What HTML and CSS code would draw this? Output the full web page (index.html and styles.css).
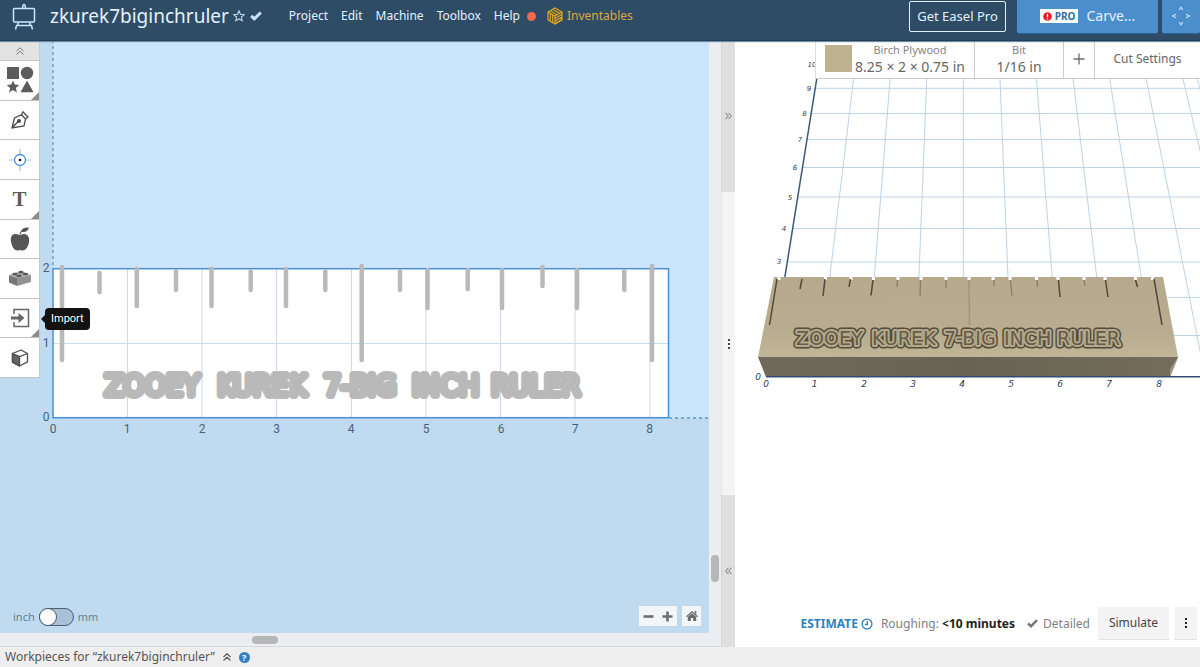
FILE: index.html
```html
<!DOCTYPE html>
<html lang="en">
<head>
<meta charset="utf-8">
<title>zkurek7biginchruler</title>
<link rel="stylesheet" href="styles.css">
</head>
<body>
<header class="topbar">
  <a class="logo" href="#" aria-label="Home"><svg width="26" height="26" viewBox="0 0 26 26" fill="none" stroke="#cbe8fb" stroke-width="1.5"><rect x="2.5" y="5.5" width="21" height="13.5" rx="1"/><path d="M11.5 5.500l.5-3q1-2 2 0l.5 3M5 22.500h16M7 19.500v3M19 19.500v3M5.500 22.500l-1 4M20.500 22.500l1 4"/></svg></a>
  <h1 class="title">zkurek7biginchruler</h1>
  <button class="bare star" aria-label="Favorite"><svg width="12" height="12" viewBox="0 0 12 12" fill="none" stroke="#bcd9ee" stroke-width="1.1"><path d="M6 .9l1.500 3.300 3.700.4-2.800 2.400.8 3.700L6 8.900l-3.200 1.800.8-3.700L.8 4.600l3.700-.4z"/></svg></button>
  <svg class="saved" width="12" height="10" viewBox="0 0 12 10" fill="none" stroke="#cbe3f4" stroke-width="3"><path d="M1.200 4.800l3.100 3L10.800 1.500"/></svg>
  <nav class="menu">
    <a href="#">Project</a><a href="#">Edit</a><a href="#">Machine</a><a href="#">Toolbox</a><a href="#">Help</a>
  </nav>
  <span class="dot"></span>
  <a class="shop" href="#"><svg width="16" height="18" viewBox="0 0 16 18" fill="none" stroke="#e5a81d" stroke-width="1.200"><path d="M8 1l7 4v8l-7 4-7-4V5zM8 9v8M1 5l7 4 7-4M3.300 3.700l7 4M5.700 2.300l7 4M3.300 6.300v8M5.700 7.700v8M8 11.500l7-4M8 14l7-4M8 16.500l7-4"/></svg>Inventables</a>
  <div class="actions">
    <button class="pro">Get Easel Pro</button>
    <button class="carve"><span class="badge"><svg width="9" height="9" viewBox="0 0 9 9"><circle cx="4.500" cy="4.500" r="4.300" fill="#e51d24"/><path d="M4.500 1.800v3.500M4.500 6.200v1.300" stroke="#fff" stroke-width="1.300"/></svg>PRO</span>Carve...</button>
    <button class="jog" aria-label="Jog"><svg width="20" height="20" viewBox="0 0 20 20" fill="none" stroke="#cce5f8" stroke-width="1.100"><path d="M8.200 4l1.800-2.700L11.800 4M8.200 16l1.800 2.700L11.800 16M5 8.200L1.500 10 5 11.800M15 8.200l3.500 1.800-3.500 1.800"/></svg></button>
  </div>
</header>

<main class="work">
  <section class="design">
    <div class="canvas">
      <svg class="drawing" viewBox="0 40 709 593" preserveAspectRatio="xMinYMin slice">
        <rect y="40" width="709" height="593" fill="#c0daf0"/>
        <rect x="53" y="40" width="656" height="378" fill="#cbe5fd"/>
        <path d="M53 40V268M669 418H709" stroke="#5b97cb" stroke-width="1.300" stroke-dasharray="3 3"/>
        <rect x="53" y="268.700" width="615.500" height="149" fill="#fff"/>
        <path d="M127.500 269V417M202 269V417M276.500 269V417M351.500 269V417M426 269V417M500.500 269V417M575 269V417M650 269V417M53 343.500H668" stroke="#c9dbec"/>
        <rect x="53" y="268.700" width="615.500" height="149" fill="none" stroke="#4a90cf" stroke-width="1.500"/>
        <path class="marks" d="M62 267V360M99.500 273V292M136.800 269V306M176 271V290M211.500 269V306M250.700 271V290M286 269V306M325.300 271V290M361.700 266V360M400 271V290M427.500 270V308M467.700 270V289M502 270V308M542.500 267V286M577 270V308M624.300 271V290M652 266V360"/>
        <g class="lettering"><text x="105" y="395">ZOOEY</text><text x="216" y="395">KUREK</text><text x="324" y="395">7-BIG</text><text x="412" y="395">INCH</text><text x="491" y="395">RULER</text></g>
        <g class="scale"><text x="53" y="433">0</text><text x="127" y="433">1</text><text x="202" y="433">2</text><text x="276.500" y="433">3</text><text x="351" y="433">4</text><text x="426" y="433">5</text><text x="501" y="433">6</text><text x="575" y="433">7</text><text x="649.500" y="433">8</text><text x="46" y="421">0</text><text x="46" y="347">1</text><text x="46" y="272">2</text></g>
      </svg>

      <div class="tools">
        <button class="collapse" aria-label="Collapse"><svg width="8" height="8" viewBox="0 0 8 8" fill="none" stroke="#777" stroke-width="1"><path d="M.5 4L4 .8 7.500 4M.5 7.500L4 4.300l3.500 3.200"/></svg></button>
        <div class="toolset">
          <button class="tool more" aria-label="Shapes"><svg width="28" height="28" viewBox="0 0 28 28" fill="#5c5c5c"><rect x="1" y="1" width="12" height="12"/><circle cx="21" cy="7" r="6.200"/><path d="M7 14.500l1.800 4.100 4.400.4-3.300 3 1 4.400L7 24.100l-3.900 2.300 1-4.400-3.300-3 4.400-.4zM21 14.500l6.500 11.800h-13z"/></svg></button>
          <button class="tool" aria-label="Pen"><svg width="20" height="20" viewBox="0 0 20 20" fill="none" stroke="#4b4b4b" stroke-width="1.300"><path d="M2 18L4.500 8l7-3.200 1.500-3 5 5.200-2.500 2-1.500 7zM2 18l6-6.500M11.500 4.800l4 4.200"/><circle cx="9" cy="11" r="1.300" fill="#4b4b4b"/></svg></button>
          <button class="tool" aria-label="Drill point"><svg width="22" height="22" viewBox="0 0 22 22" fill="none"><path d="M11 0v5M11 17v5M0 11h5M17 11h5" stroke="#b5b9be" stroke-width="1.100"/><circle cx="11" cy="11" r="5.500" stroke="#3e8de0" stroke-width="1.300"/><circle cx="11" cy="11" r="1.300" fill="#111"/></svg></button>
          <button class="tool more text-tool">T</button>
          <button class="tool" aria-label="Icons"><svg width="20" height="24" viewBox="0 0 20 24" fill="#555"><path d="M9.500 8.300C5.500 5.500.5 7 .8 13c.3 6 3.700 11 7 10.500l2.200-.5 2.200.5c3.300.5 7-4.500 7-10.500 0-5.500-5-7.500-8.700-4.700-.1-2 .6-2.900 1.500-3.300C16 5.500 18.500 3 18.800.5c-4-.3-7 .7-7.800 3.800-1 .8-1.500 2-1.500 4z"/></svg></button>
          <button class="tool" aria-label="Apps"><svg width="24" height="20" viewBox="0 0 24 20"><path d="M1 7l8 3v8l-8-3.500z" fill="#777"/><path d="M9 10l14-3v7l-14 4z" fill="#929292"/><path d="M1 7l12-4 10 4-14 3z" fill="#a3a3a3"/><g fill="#555"><ellipse cx="7" cy="6" rx="2.500" ry="1.200"/><ellipse cx="13" cy="4" rx="2.500" ry="1.200"/><ellipse cx="11" cy="8" rx="2.500" ry="1.200"/><ellipse cx="17.500" cy="6" rx="2.500" ry="1.200"/></g></svg></button>
          <button class="tool more" aria-label="Import"><svg width="20" height="20" viewBox="0 0 20 20" fill="none" stroke="#666"><path d="M4 6V1.500h14.500v17H4V14" stroke-width="1.500"/><path d="M1 10h8" stroke-width="3"/><path d="M8.500 5l6 5-6 5z" fill="#666" stroke="none"/></svg><span class="tip" role="tooltip">Import</span></button>
          <button class="tool" aria-label="Box"><svg width="18" height="18" viewBox="0 0 18 18" fill="#fff" stroke="#4c4c4c" stroke-width="1.300" stroke-linejoin="round"><path d="M1.500 4.500L10 1l6.500 3.500v8.300L8.500 17l-7-3.700z"/><path d="M1.500 4.500l7 3.200V17l-7-3.700z" fill="#666"/><path d="M8.500 7.700l8-3.200"/></svg></button>
        </div>
      </div>

      <label class="units"><span>inch</span><input type="checkbox" role="switch"><span>mm</span></label>
      <div class="zoom">
        <div class="pair"><button aria-label="Zoom out"><svg width="11" height="11" viewBox="0 0 11 11"><path d="M.5 5.500h10" stroke="#6e6e6e" stroke-width="2.600"/></svg></button><button aria-label="Zoom in"><svg width="11" height="11" viewBox="0 0 11 11"><path d="M.5 5.500h10M5.500.5v10" stroke="#6e6e6e" stroke-width="2.600"/></svg></button></div>
        <button class="home" aria-label="Fit"><svg width="12" height="10" viewBox="0 0 12 10" fill="#6a6a6a"><path d="M6 2.300l4.200 3.800V10H7.200V7H4.800v3H1.800V6.100z"/><path d="M.5 5.700L6 .8l5.500 4.900" fill="none" stroke="#6a6a6a" stroke-width="1.200"/><path d="M8.700 0h1.600v3.500L8.700 2z"/></svg></button>
      </div>
    </div>
    <div class="vscroll"><span></span></div>
    <div class="hscroll"><span></span></div>
  </section>

  <div class="divider">
    <button class="grab expand" aria-label="Expand right"><svg width="7" height="8" viewBox="0 0 7 8" fill="none" stroke="#777"><path d="M.5.8L3.300 4 .5 7.200M3.500.8L6.300 4 3.500 7.200"/></svg></button>
    <div class="grab handle"><i></i><i></i><i></i></div>
    <button class="grab shrink" aria-label="Expand left"><svg width="7" height="8" viewBox="0 0 7 8" fill="none" stroke="#777"><path d="M3.500.8L.7 4l2.800 3.200M6.500.8L3.700 4l2.800 3.200"/></svg></button>
  </div>

  <section class="preview">
    <svg class="drawing" viewBox="735 40 465 607" preserveAspectRatio="xMinYMin slice">
      <defs>
        <linearGradient id="top" x1="0" y1="0" x2="0" y2="1"><stop offset="0" stop-color="#b6a98d"/><stop offset=".7" stop-color="#b9ad91"/><stop offset="1" stop-color="#c0b596"/></linearGradient>
        <linearGradient id="front" x1="0" y1="0" x2="1" y2="0"><stop offset="0" stop-color="#6f6a5b"/><stop offset=".5" stop-color="#696353"/><stop offset="1" stop-color="#746d5b"/></linearGradient>
      </defs>
      <path class="grid3d" d="M858.200 40L818 376M893.200 40L866.500 376M928.300 40L915 376M963.300 40V376M998.400 40L1012 376M1033.400 40L1060 376M1068.500 40L1108.500 376M1103.500 40L1157 376M1138.500 40L1205 376M1173.600 40L1254 376M1208 120L1195 70M814 88.300H1200M810 113.500H1200M806 139.500H1200M802 167.500H1200M797 197H1200M792 228.500H1200M787 262H1200M1000 297.500H1200M1000 335.500H1200"/>
      <path d="M823 40L772 357" stroke="#3a5878" stroke-width="1.500"/>
      <path d="M774 277H1163L1178 357H758z" fill="url(#top)"/>
      <path d="M758 357H1178L1170 377H766z" fill="url(#front)"/>
      <path d="M1178 357L1170 377V369z" fill="#9f967b"/>
      <path d="M830 309q60-18 110-20t110 7M800 290q70 12 190 4" fill="none" stroke="#c0a98a" stroke-width="2" opacity=".25"/>
      <path d="M766 376.700H1200" stroke="#2f4c70" stroke-width="1.400"/>
      <path class="notches" d="M779 277v3M825.500 277v3M851 277v3M873.500 277v3M898 277v3M921 277v3M946 277v3M969 277v3M993 277v3M1010 277v3M1036.500 277v3M1058 277v3M1084 277v3M1105 277v3M1135.500 277v3M1152.500 277v3"/>
      <path class="cuts" d="M777 279L769.500 325M802 279L800 289M825 279L823 296M850.500 279L849 287M873 280L871 295.500M1105.500 280L1108 297M1135.500 280L1137.500 287M1154 279L1162 325M1058.500 280L1060 297"/>
      <path class="cuts faint" d="M897.500 280L897 287M920.500 280L920 296M946 280V288M994 280V286M1010.500 280L1012 296M1037 280L1037.500 287M1084 280L1085 286"/>
      <path class="cuts pale" d="M969 280L969.500 325"/>
      <g class="engraved shade"><text x="796" y="345">ZOOEY</text><text x="872" y="345">KUREK</text><text x="944" y="345">7-BIG</text><text x="1004" y="345">INCH</text><text x="1057" y="345">RULER</text></g>
      <g class="engraved floor"><text x="796" y="345">ZOOEY</text><text x="872" y="345">KUREK</text><text x="944" y="345">7-BIG</text><text x="1004" y="345">INCH</text><text x="1057" y="345">RULER</text></g>
      <g class="scale3d"><text x="766" y="387">0</text><text x="814.500" y="387">1</text><text x="864" y="387">2</text><text x="913" y="387">3</text><text x="962" y="387">4</text><text x="1011" y="387">5</text><text x="1060" y="387">6</text><text x="1109" y="387">7</text><text x="1159" y="387">8</text><text x="758" y="380">0</text></g>
      <g class="scale3d far"><text x="779" y="264">3</text><text x="784" y="231">4</text><text x="790" y="200">5</text><text x="795" y="170">6</text><text x="800" y="142">7</text><text x="804.500" y="116">8</text><text x="809" y="91">9</text><text x="812" y="67">10</text></g>
    </svg>

    <div class="setup">
      <button class="cell material"><span class="swatch"></span><span class="stack"><small>Birch Plywood</small><b>8.25 × 2 × 0.75 in</b></span></button>
      <button class="cell bit"><span class="stack"><small>Bit</small><b>1/16 in</b></span></button>
      <button class="cell add" aria-label="Add bit"><svg width="12" height="12" viewBox="0 0 12 12"><path d="M.5 6h11M6 .5v11" stroke="#6c6c6c" stroke-width="1.300"/></svg></button>
      <button class="cell cut">Cut Settings</button>
    </div>

    <div class="sim">
      <a class="estimate" href="#">ESTIMATE<svg width="12" height="12" viewBox="0 0 12 12" fill="none" stroke="#2f7fc1" stroke-width="1.300"><circle cx="6" cy="6" r="4.900"/><path d="M6.300 3v3.500H3.800"/></svg></a>
      <span class="rough">Roughing: <strong>&lt;10 minutes</strong></span>
      <span class="detailed"><svg width="11" height="9" viewBox="0 0 11 9" fill="none" stroke="#777" stroke-width="2.500"><path d="M1 4.500l3 2.700L10 1.200"/></svg>Detailed</span>
      <button class="flat">Simulate</button>
      <button class="flat kebab" aria-label="More"><i></i><i></i><i></i></button>
    </div>
  </section>
</main>

<footer class="status">
  <span>Workpieces for “zkurek7biginchruler”</span>
  <button class="bare" aria-label="Show workpieces"><svg width="8" height="8" viewBox="0 0 8 8" fill="none" stroke="#555" stroke-width="1.100"><path d="M.5 4L4 .8 7.500 4M.5 7.500L4 4.300l3.500 3.200"/></svg></button>
  <a class="help" href="#">?</a>
</footer>
</body>
</html>
```
FILE: styles.css
```css
* { box-sizing: border-box; }
body {
  margin: 0;
  height: 100vh;
  display: grid;
  grid-template-rows: 40px minmax(0, 1fr) 20px;
  font: 13px/18px "Noto Sans", "Open Sans", sans-serif;
  color: #555;
  background: #fff;
  overflow: hidden;
}
button { font: inherit; color: inherit; border: 0; padding: 0; margin: 0; background: none; cursor: pointer; }
a { color: inherit; text-decoration: none; }
svg { display: block; flex: none; }

.topbar {
  position: relative;
  z-index: 2;
  display: flex;
  align-items: center;
  padding: 0 0 8px 11px;
  background: #2e4c66;
  color: #e2f2fd;
  box-shadow: 0 1px 0 #223e57, 0 2px 1px #6f8ba3;
  white-space: nowrap;
}
.title { margin: 0 4px 0 13px; font-size: 19px; line-height: 28px; font-weight: 400; }
.saved { margin: 0 27px 0 5px; }
.bare { display: flex; }
.menu { display: flex; gap: 13px; font-size: 12px; }
.dot { width: 9px; height: 9px; margin: 0 11px 0 7px; border-radius: 50%; background: #f0694a; }
.shop { display: flex; align-items: center; gap: 4px; font-size: 12px; color: #dfa744; }
.logo svg { overflow: visible; }
.actions { display: flex; align-items: center; margin-left: auto; height: 32px; }
.pro { height: 31px; width: 97px; margin-right: 11px; border: 1px solid #e2f2fd; border-radius: 2px; }
.carve { display: flex; align-items: center; justify-content: center; gap: 8px; width: 141px; height: 34px; margin-right: 4px; background: #4a8fcc; border-radius: 0 0 2px 2px; font-size: 14px; box-shadow: 0 1px 1px #2f6699; }
.badge { display: flex; align-items: center; gap: 3px; height: 14px; padding: 0 3px; background: #fff; color: #2f6ea8; font-size: 10px; font-weight: 700; }
.jog { display: grid; place-items: center; width: 38px; height: 34px; background: #4a8fcc; border-radius: 0 0 2px 2px; box-shadow: 0 1px 1px #2f6699; }

.work { display: grid; grid-template-columns: minmax(0, 721fr) 14px minmax(0, 465fr); min-height: 0; }
.design { display: grid; grid-template-columns: minmax(0, 1fr) 12px; grid-template-rows: minmax(0, 1fr) 14px; background: #ebedf1; min-height: 0; }
.canvas { position: relative; overflow: hidden; background: #c0daf0; }
.drawing { width: 100%; height: 100%; }
.vscroll { display: flex; align-items: flex-end; justify-content: center; padding-bottom: 51px; }
.vscroll span { width: 8px; height: 27px; border-radius: 4px; background: #b7b7b9; }
.hscroll { grid-column: 1 / -1; padding: 3px 0 0 252px; border-bottom: 1px solid #d9d9dc; }
.hscroll span { display: block; width: 26px; height: 8px; border-radius: 4px; background: #b7b7b9; }

.marks { stroke: #b9b9b9; stroke-width: 4.500; stroke-linecap: round; fill: none; }
.lettering { font: 200 27px "DejaVu Sans", sans-serif; fill: #b9b9b9; stroke: #b9b9b9; stroke-width: 8; stroke-linejoin: round; }
.scale { font: 12px Roboto, sans-serif; fill: #46617b; text-anchor: middle; }

.tools { position: absolute; top: 2px; left: 0; width: 40px; border-right: 1px solid #c5ccd3; background: #fff; }
.collapse { display: grid; place-items: center; width: 100%; height: 19px; background: #e3e3e3; border-bottom: 1px solid #c8c8c8; }
.toolset { display: grid; grid-template-rows: repeat(8, 1fr); height: 317px; }
.tool { position: relative; display: grid; place-items: center; background: #fff; border-bottom: 1px solid #c4c4c4; }
.more::after { content: ""; position: absolute; right: 0; bottom: 0; border: 4px solid; border-color: transparent #8c8c8c #8c8c8c transparent; }
.text-tool { font: 700 21px/24px "Liberation Serif", serif; color: #5c5c5c; }
.tip { position: absolute; left: 45px; top: 9px; padding: 2px 6px; height: 22px; border-radius: 4px; background: #121212; color: #fff; font: 11px/17px Roboto, sans-serif; }
.tip::before { content: ""; position: absolute; left: -8px; top: 7px; border: 4px solid transparent; border-right-color: #121212; }

.units { position: absolute; left: 13px; bottom: 7px; display: flex; align-items: center; gap: 4px; font-size: 11px; color: #6b7f90; }
.units input { appearance: none; width: 35px; height: 18px; margin: 0; border: 1px solid #4b5f72; border-radius: 9px; background: #a8c1d7; }
.units input::before { content: ""; display: block; width: 16px; height: 16px; border-radius: 50%; background: #fff; box-shadow: 0 0 0 1px #4b5f72; }
.zoom { position: absolute; right: 8px; bottom: 7px; display: flex; gap: 5px; }
.pair { display: flex; }
.zoom button { display: grid; place-items: center; width: 19px; height: 20px; background: #f4f5f6; }

.divider { display: grid; grid-template-rows: 152fr 303fr 152fr; }
.grab { display: grid; place-items: center; background: #dfdfdf; border-left: 1px solid #d4d4d4; }
.handle { align-content: center; gap: 2px; background: #f4f4f4; border-color: #e6e6e6; }
.handle i { width: 2px; height: 2px; background: #444; }

.preview { position: relative; overflow: hidden; }
.grid3d { fill: none; stroke: #bcd3e8; }
.notches { stroke: #fff; stroke-width: 3; }
.cuts { stroke: #51483a; stroke-width: 1.500; }
.faint { stroke: #857a63; stroke-width: 1.200; }
.pale { stroke: #a0947a; }
.engraved { font: 19px "DejaVu Sans", sans-serif; stroke-linejoin: round; paint-order: stroke; }
.shade { fill: #554c3b; stroke: #554c3b; stroke-width: 7; }
.floor { fill: #665c48; stroke: #b4a98c; stroke-width: 4; }
.scale3d { font: italic 9px "DejaVu Sans", sans-serif; fill: #2b4057; text-anchor: middle; }
.far { font-size: 7px; }

.setup { position: absolute; top: 1px; right: 0; display: flex; height: 38px; background: #fff; border-bottom: 1px solid #c9c9c9; border-left: 1px solid #ddd; color: #666; white-space: nowrap; }
.cell { display: flex; align-items: center; justify-content: center; border-left: 1px solid #ccc; padding-bottom: 2px; }
.material { width: 158px; gap: 3px; border-left: 0; }
.swatch { width: 27px; height: 27px; background: #bfb28f; }
.stack { display: flex; flex-direction: column; align-items: center; }
.stack small { font-size: 11px; line-height: 16px; color: #858585; }
.stack b { font-weight: 400; font-size: 14px; line-height: 18px; }
.bit { width: 89px; }
.add { width: 31px; }
.cut { width: 106px; font-size: 12px; }

.sim { position: absolute; right: 3px; bottom: 7px; display: flex; align-items: center; font-size: 12px; white-space: nowrap; }
.estimate { display: flex; align-items: center; gap: 3px; margin-right: 8px; color: #2f7fc1; font-weight: 700; }
.rough { margin-right: 12px; color: #808080; }
.rough strong { color: #222; }
.detailed { display: flex; align-items: center; gap: 5px; margin-right: 8px; color: #808080; }
.flat { width: 71px; height: 33px; margin-right: 5px; background: #f4f4f4; border-bottom: 1px solid #e2e2e2; color: #444; font-size: 12px; }
.kebab { display: grid; place-items: center; place-content: center; gap: 2px; width: 23px; margin: 0; }
.kebab i { width: 2px; height: 2px; background: #222; }

.status { display: flex; align-items: center; gap: 8px; padding-left: 5px; background: #eee; font-size: 12px; white-space: nowrap; }
.help { width: 11px; height: 11px; border-radius: 50%; background: #2f80c5; color: #fff; font-size: 9px; line-height: 11px; font-weight: 700; text-align: center; }
```
